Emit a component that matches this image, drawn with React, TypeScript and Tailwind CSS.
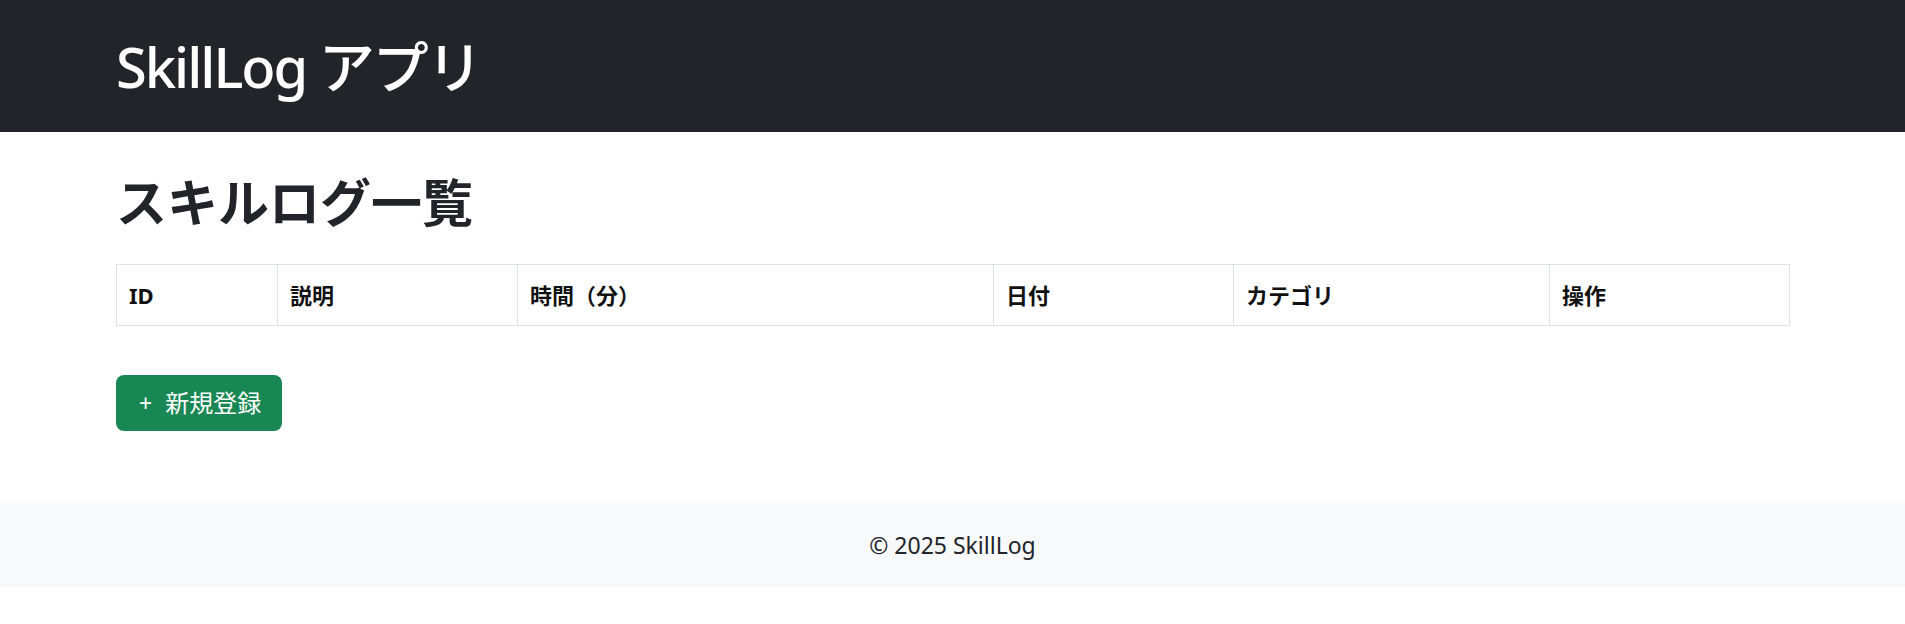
const font = "font-['Noto_Sans','Noto_Sans_CJK_JP',sans-serif]";

const columns = [
  { label: "ID", width: "w-[161px]" },
  { label: "説明", width: "w-[240px]" },
  { label: "時間（分）", width: "w-[476px]" },
  { label: "日付", width: "w-[240px]" },
  { label: "カテゴリ", width: "w-[316px]" },
  { label: "操作", width: "w-[240px]" },
];

export default function App() {
  return (
    <div className={`min-h-[624px] bg-white text-[#212529] ${font}`}>
      <header className="flex h-[132px] items-center bg-[#212529] px-[116px]">
        <h1 className="text-[56px] leading-none font-medium tracking-[-2px] text-white">
          SkillLog アプリ
        </h1>
      </header>

      <main className="px-[116px] pt-[40px] pb-[72px]">
        <h2 className="text-[51px] leading-[60px] font-bold text-[#212529]">
          スキルログ一覧
        </h2>

        <table className="mt-[32px] w-full table-fixed border-collapse border border-[#dee2e6]">
          <thead>
            <tr className="h-[61px]">
              {columns.map((col) => (
                <th
                  key={col.label}
                  className={`${col.width} border border-[#dee2e6] px-[12px] text-left text-[22px] font-bold text-[#111]`}
                >
                  {col.label}
                </th>
              ))}
            </tr>
          </thead>
          <tbody />
        </table>

        <button
          type="button"
          className="mt-[49px] flex h-[56px] items-center gap-[13px] rounded-[8px] bg-[#198754] pr-[21px] pl-[23px] text-[24px] text-white"
        >
          <span className="text-[23px] leading-none">+</span>
          <span>新規登録</span>
        </button>
      </main>

      <footer className="flex h-[84px] items-center justify-center bg-[#f8f9fa] text-[23px] text-[#212529]">
        © 2025 SkillLog
      </footer>
    </div>
  );
}
